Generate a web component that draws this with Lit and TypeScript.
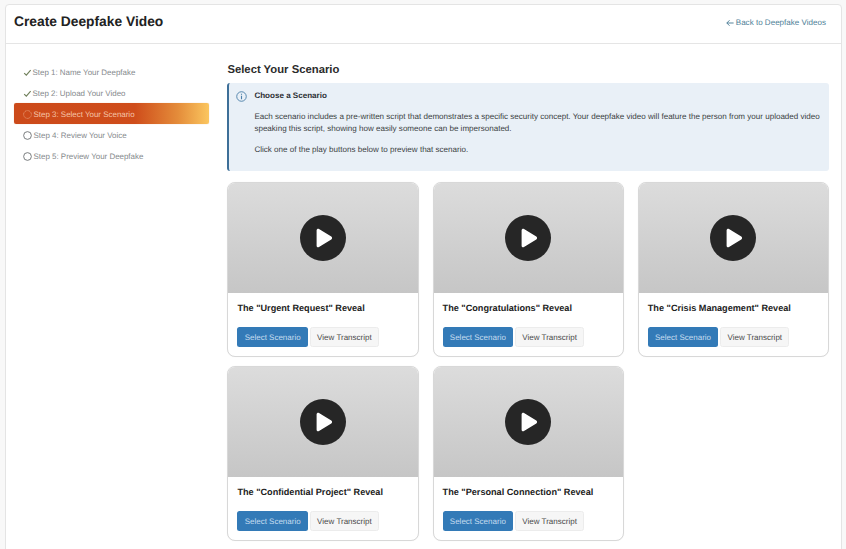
import { LitElement, html, css } from "lit";
import { customElement } from "lit/decorators.js";

const steps = [
  { label: "Step 1: Name Your Deepfake", state: "done" },
  { label: "Step 2: Upload Your Video", state: "done" },
  { label: "Step 3: Select Your Scenario", state: "active" },
  { label: "Step 4: Review Your Voice", state: "todo" },
  { label: "Step 5: Preview Your Deepfake", state: "todo" },
];
const scenarios = ["Urgent Request", "Congratulations", "Crisis Management", "Confidential Project", "Personal Connection"];

@customElement("app-root")
export class AppRoot extends LitElement {
  static styles = css`
    :host { display: block; height: 549px; overflow: hidden; background: #f8f8f8; font-family: "Liberation Sans", Arial, sans-serif; color: #222; text-rendering: geometricPrecision; }
    .page { padding: 4px 4px 0 5px; }
    .shell { background: #fff; border: 1px solid #e4e4e4; border-radius: 4px; height: 700px; box-sizing: border-box; }
    .top { height: 38px; border-bottom: 1px solid #e5e5e5; display: flex; align-items: flex-start; justify-content: space-between; padding: 0 15px 0 8px; }
    h1 { margin: 7.5px 0 0; font-size: 13.8px; line-height: 18px; font-weight: 700; color: #222; }
    .back { margin-top: 12px; font-size: 8.06px; line-height: 12px; color: #4f7f98; display: flex; align-items: center; gap: 2px; }
    .back svg { width: 8px; height: 8px; }
    .body { display: flex; padding: 18px 12px 0 8px; gap: 18.4px; }
    .side { width: 195px; flex: none; display: flex; flex-direction: column; margin-top: -1px; }
    .step { height: 21px; display: flex; align-items: center; gap: 1.5px; padding: 1px 0 0 9px; font-size: 7.95px; color: #85898c; box-sizing: border-box; border-radius: 2px; }
    .step svg { width: 9px; height: 9px; flex: none; }
    .step.done { gap: .5px; }
    .step.active { color: #f5c4a8; background: linear-gradient(90deg, #cc4a1a 0%, #cf4d1b 62%, #e48c3a 84%, #fbc65f 100%); box-shadow: 0 0 1px #e9b98c; }
    .main { flex: 1; min-width: 0; }
    h2 { margin: 1px 0 0; font-size: 11.3px; line-height: 14px; font-weight: 700; color: #2b2b2b; }
    .note { margin-top: 6px; height: 88px; box-sizing: border-box; background: #e9f0f7; border-left: 2px solid #3d6f98; border-radius: 3px; padding: 7px 4px 0 7px; font-size: 8.05px; line-height: 12.6px; color: #3a3e42; }
    .note-title { display: flex; align-items: center; gap: 7px; font-weight: 700; color: #2b2f33; }
    .note-title svg { width: 11px; height: 11px; flex: none; }
    .note p { margin: 0 0 0 18px; }
    .note p.a { margin-top: 8px; }
    .note p.b { margin-top: 8px; }
    .grid { margin-top: 11px; display: grid; grid-template-columns: repeat(3, 1fr); column-gap: 14px; row-gap: 9px; }
    .card { height: 175px; box-sizing: border-box; border: 1px solid #d8d8d8; border-radius: 8px; overflow: hidden; background: #fff; box-shadow: 0 0 1px rgba(0,0,0,.08); }
    .thumb { height: 110px; background: linear-gradient(180deg, #dcdcdc, #c6c6c6); display: flex; align-items: center; justify-content: center; }
    .play { width: 46px; height: 46px; border-radius: 50%; background: #262626; display: flex; align-items: center; justify-content: center; }
    .play svg { width: 20px; height: 20px; }
    .info { padding: 9px 9px 0; }
    h3 { margin: 0; font-size: 9.15px; line-height: 12px; font-weight: 700; color: #222; }
    .btns { margin-top: 13px; display: flex; gap: 2px; }
    .btn { height: 20px; box-sizing: border-box; border-radius: 2.5px; font-size: 8px; display: flex; align-items: center; justify-content: center; }
    .primary { width: 70.5px; background: #337ab7; color: #c5dcef; }
    .secondary { width: 69px; background: #f6f6f6; border: 1px solid #ececec; color: #494949; }
  `;

  private icon(state: string) {
    if (state === "done") return html`<svg viewBox="0 0 10 10" fill="none" stroke="#6f7f5a" stroke-width="1.25"><path d="M1.300 5.600 3.700 8 8.500 2.400"/></svg>`;
    if (state === "active") return html`<svg viewBox="0 0 10 10" fill="none" stroke="#f0b898" stroke-width=".8"><circle cx="5" cy="5" r="4.3" stroke-dasharray="1 .55"/></svg>`;
    return html`<svg viewBox="0 0 10 10" fill="none" stroke="#6b6f72" stroke-width="1"><circle cx="5" cy="5" r="4.3"/></svg>`;
  }

  render() {
    return html`
      <div class="page"><div class="shell">
        <div class="top">
          <h1>Create Deepfake Video</h1>
          <div class="back"><svg viewBox="0 0 10 10" fill="none" stroke="#4f7f98" stroke-width="1.2"><path d="M9.5 5H1M4.4 1.6 1 5l3.4 3.4"/></svg>Back to Deepfake Videos</div>
        </div>
        <div class="body">
          <nav class="side">
            ${steps.map((s) => html`<div class="step ${s.state}">${this.icon(s.state)}<span>${s.label}</span></div>`)}
          </nav>
          <main class="main">
            <h2>Select Your Scenario</h2>
            <section class="note">
              <div class="note-title">
                <svg viewBox="0 0 12 12" fill="none" stroke="#4a7fa8"><circle cx="6" cy="6" r="5.2"/><path d="M6 5.3V9M6 3v1.2" stroke-width="1.2"/></svg>
                Choose a Scenario
              </div>
              <p class="a">Each scenario includes a pre-written script that demonstrates a specific security concept. Your deepfake video will feature the person from your uploaded video speaking this script, showing how easily someone can be impersonated.</p>
              <p class="b">Click one of the play buttons below to preview that scenario.</p>
            </section>
            <div class="grid">
              ${scenarios.map((n) => html`
                <article class="card">
                  <div class="thumb"><div class="play"><svg viewBox="0 0 20 20"><path d="M3.600 2.300c0-1.300 1.300-2 2.400-1.400l12.300 7.700c1.100.700 1.100 2.100 0 2.800l-12.300 7.700c-1.100.600-2.400-.100-2.400-1.400z" fill="#fff"/></svg></div></div>
                  <div class="info">
                    <h3>The "${n}" Reveal</h3>
                    <div class="btns"><div class="btn primary">Select Scenario</div><div class="btn secondary">View Transcript</div></div>
                  </div>
                </article>`)}
            </div>
          </main>
        </div>
      </div></div>
    `;
  }
}
